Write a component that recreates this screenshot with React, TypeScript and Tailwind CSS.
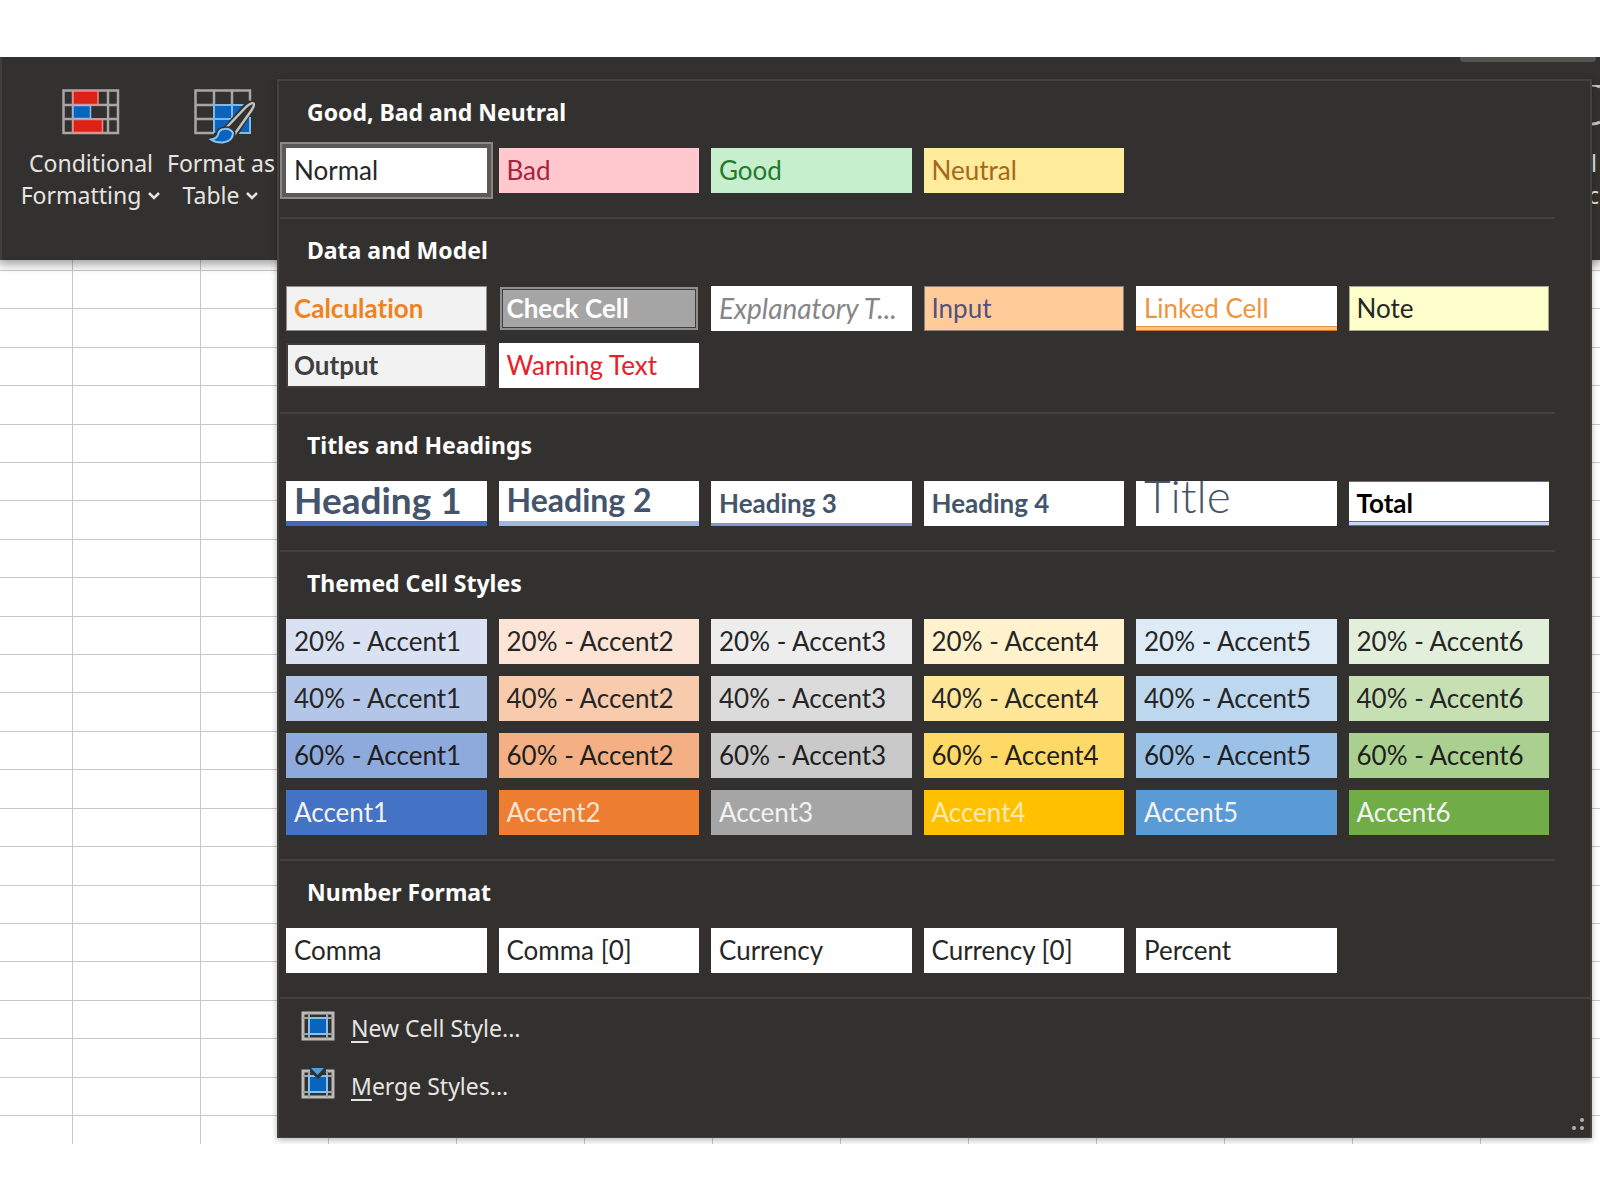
import { useState } from 'react'
import clsx from 'clsx'

interface CellStyle {
  name: string
  look: string
  text?: string
}

interface StyleGroup {
  title: string
  styles: CellStyle[]
}

const groups: StyleGroup[] = [
  {
    title: 'Good, Bad and Neutral',
    styles: [
      { name: 'Normal', look: 'bg-white text-[#262626]' },
      { name: 'Bad', look: 'bg-[#ffc7ce] text-[#a5243a]' },
      { name: 'Good', look: 'bg-[#c6efce] text-[#257a2b]' },
      { name: 'Neutral', look: 'bg-[#ffeb9c] text-[#a5681a]' },
    ],
  },
  {
    title: 'Data and Model',
    styles: [
      { name: 'Calculation', look: 'bg-[#f2f2f2] text-[#f0821e] font-bold shadow-[inset_0_0_0_1px_#8c8b8a]' },
      {
        name: 'Check Cell',
        look: 'bg-[#a5a5a5] text-white font-bold shadow-[inset_0_0_0_1px_#33312f,inset_0_0_0_3px_#8f8f8f,inset_0_0_0_4px_#3f3f3f]',
      },
      { name: 'Explanatory T...', look: 'bg-white text-[#868686] italic', text: 'text-[28px] leading-9' },
      { name: 'Input', look: 'bg-[#ffcc99] text-[#55507c] shadow-[inset_0_0_0_1px_#8c8179]' },
      {
        name: 'Linked Cell',
        look: 'bg-white text-[#ee9440] shadow-[inset_0_-1px_0_#cf7420,inset_0_-4px_0_#fcc27c,inset_0_-5px_0_#dd934a]',
      },
      { name: 'Note', look: 'bg-[#ffffcc] text-[#262626] shadow-[inset_0_0_0_1px_#a6a595]' },
      { name: 'Output', look: 'bg-[#f2f2f2] text-[#3f3f3f] font-bold shadow-[inset_0_0_0_2px_#3f3e3d]' },
      { name: 'Warning Text', look: 'bg-white text-[#e8202a]' },
    ],
  },
  {
    title: 'Titles and Headings',
    styles: [
      {
        name: 'Heading 1',
        look: 'bg-white text-[#44546a] font-bold shadow-[inset_0_-5px_0_#4068b8]',
        text: 'text-[37px] leading-[37px] pb-2',
      },
      {
        name: 'Heading 2',
        look: 'bg-white text-[#44546a] font-bold shadow-[inset_0_-5px_0_#a2b5dd]',
        text: 'text-[32px] leading-[37px] pb-2',
      },
      { name: 'Heading 3', look: 'bg-white text-[#44546a] font-bold shadow-[inset_0_-3px_0_#8099cc]' },
      { name: 'Heading 4', look: 'bg-white text-[#44546a] font-bold' },
      { name: 'Title', look: 'bg-white text-[#44546a] font-light', text: 'text-[46px] leading-[37px] pb-4' },
      {
        name: 'Total',
        look: 'bg-white text-black font-bold shadow-[inset_0_1px_0_#4a72c0,inset_0_-1px_0_#4a72c0,inset_0_-4px_0_#c6d6f4,inset_0_-5px_0_#4a72c0]',
      },
    ],
  },
  {
    title: 'Themed Cell Styles',
    styles: [
      { name: '20% - Accent1', look: 'bg-[#d9e1f2] text-[#262626]' },
      { name: '20% - Accent2', look: 'bg-[#fce4d6] text-[#262626]' },
      { name: '20% - Accent3', look: 'bg-[#ededed] text-[#262626]' },
      { name: '20% - Accent4', look: 'bg-[#fff2cc] text-[#262626]' },
      { name: '20% - Accent5', look: 'bg-[#ddebf7] text-[#262626]' },
      { name: '20% - Accent6', look: 'bg-[#e2efda] text-[#262626]' },
      { name: '40% - Accent1', look: 'bg-[#b4c6e7] text-[#262626]' },
      { name: '40% - Accent2', look: 'bg-[#f8cbad] text-[#262626]' },
      { name: '40% - Accent3', look: 'bg-[#dbdbdb] text-[#262626]' },
      { name: '40% - Accent4', look: 'bg-[#ffe699] text-[#262626]' },
      { name: '40% - Accent5', look: 'bg-[#bdd7ee] text-[#262626]' },
      { name: '40% - Accent6', look: 'bg-[#c6e0b4] text-[#262626]' },
      { name: '60% - Accent1', look: 'bg-[#8ea9db] text-[#1f1f1f]' },
      { name: '60% - Accent2', look: 'bg-[#f4b084] text-[#1f1f1f]' },
      { name: '60% - Accent3', look: 'bg-[#c9c9c9] text-[#1f1f1f]' },
      { name: '60% - Accent4', look: 'bg-[#ffd966] text-[#1f1f1f]' },
      { name: '60% - Accent5', look: 'bg-[#9bc2e6] text-[#1f1f1f]' },
      { name: '60% - Accent6', look: 'bg-[#a9d08e] text-[#1f1f1f]' },
      { name: 'Accent1', look: 'bg-[#4472c4] text-[#f2f2f2]' },
      { name: 'Accent2', look: 'bg-[#ed7d31] text-[#fbe5d0]' },
      { name: 'Accent3', look: 'bg-[#a5a5a5] text-[#f2f2f2]' },
      { name: 'Accent4', look: 'bg-[#ffc000] text-[#fdebb0]' },
      { name: 'Accent5', look: 'bg-[#5b9bd5] text-[#f2f2f2]' },
      { name: 'Accent6', look: 'bg-[#70ad47] text-[#f2f2f2]' },
    ],
  },
  {
    title: 'Number Format',
    styles: [
      { name: 'Comma', look: 'bg-white text-[#262626]' },
      { name: 'Comma [0]', look: 'bg-white text-[#262626]' },
      { name: 'Currency', look: 'bg-white text-[#262626]' },
      { name: 'Currency [0]', look: 'bg-white text-[#262626]' },
      { name: 'Percent', look: 'bg-white text-[#262626]' },
    ],
  },
]

function Chevron() {
  return (
    <svg width="14" height="10" viewBox="0 0 14 10" className="inline-block ml-1.5 mb-1" fill="none">
      <path d="M2 2l5 5 5-5" stroke="#e4e2e0" strokeWidth="2.5" />
    </svg>
  )
}

function ConditionalIcon() {
  return (
    <svg width="58" height="56" viewBox="0 0 58 56" fill="none">
      <path d="M1.5 1.5h54.5v42.5H1.5z M1.5 16h54.5 M1.5 30h54.5 M11 1.5v42.5 M46 1.5v42.5" stroke="#a9a7a5" strokeWidth="2.5" />
      <path d="M29.5 17.500h15v11.500h-15z" fill="#33312f" />
      <path d="M11 2h25v13.500H11z M11 30.500h29.500v13H11z" fill="#dc2217" stroke="#ee8a84" strokeWidth="1.5" />
      <path d="M11 16.500h17.500v13H11z" fill="#0a64bd" stroke="#8fbde8" strokeWidth="1.5" />
    </svg>
  )
}

function TableIcon() {
  return (
    <svg width="58" height="56" viewBox="0 0 58 56" fill="none" className="ml-1 overflow-visible">
      <path d="M20 16h36v28H20z" fill="#0a64bd" />
      <path d="M56 13V1.500H1.500V44H20 M1.500 16H20 M1.500 30H20 M20 1.500V16 M38 1.500V16" stroke="#a9a7a5" strokeWidth="2.5" />
      <path d="M20 44V16h36 M38 16v14 M20 30h22 M56 28v16H38" stroke="#7fb9ea" strokeWidth="2" />
      <path d="M32 40L54 15q4-2 4 3L40 47z" fill="#33312f" stroke="#33312f" strokeWidth="6" />
      <path d="M32 39L52 18q6-5 7.500-3.500T57 22L40 46z" fill="#33312f" stroke="#c4c2c0" strokeWidth="2.5" strokeLinejoin="round" />
      <path d="M30 40q6-1 9 4 0 8-10 9.500-7 .5-12-3 6-1 7-5 1-5 6-5.500z" fill="#0a64bd" stroke="#33312f" strokeWidth="5" />
      <path d="M30 40q6-1 9 4 0 8-10 9.500-7 .5-12-3 6-1 7-5 1-5 6-5.500z" fill="#0a64bd" stroke="#8cc4f0" strokeWidth="2" />
    </svg>
  )
}

function CellStyleIcon({ merge = false }: { merge?: boolean }) {
  return (
    <svg width="34" height="34" viewBox="0 0 34 34" fill="none" className="mb-1">
      <path d="M2 4h30v26H2z" stroke="#bdbbb9" strokeWidth="3" />
      <path d="M2 9h30 M2 25h30 M8 4v26 M26 4v26" stroke="#a5a3a1" strokeWidth="2" />
      <path d="M8 9h18v16H8z" fill="#0a64bd" stroke="#8cbfea" strokeWidth="2" />
      {merge && (
        <>
          <path d="M9 0h16v5l-8 7-8-7z" fill="#33312f" />
          <path d="M10 1h13l-6.500 7z" fill="#4a9fdc" />
        </>
      )}
    </svg>
  )
}

function Ribbon() {
  return (
    <div className="h-[203px] shrink-0 bg-[#33312f] flex items-start pl-[11px] pt-7 text-[23px] leading-8 text-[#e6e4e2] border-l-2 border-[#403e3c] relative z-10 shadow-[0_2px_10px_2px_rgba(0,0,0,0.4)]">
      <button className="w-[156px] shrink-0 flex flex-col items-center gap-0.5 pt-1 whitespace-nowrap">
        <ConditionalIcon />
        <span className="flex flex-col items-center">
          <span>Conditional</span>
          <span>Formatting<Chevron /></span>
        </span>
      </button>
      <button className="w-[104px] shrink-0 flex flex-col items-center gap-0.5 pt-1 whitespace-nowrap">
        <TableIcon />
        <span className="flex flex-col items-center">
          <span>Format as</span>
          <span>Table<Chevron /></span>
        </span>
      </button>
      <button className="ml-auto w-2 shrink-0 flex flex-col items-start">
        <svg width="8" height="62" viewBox="0 0 8 62" fill="none">
          <path d="M0 0q5 0 8 2 M0 39q5 0 8-2" stroke="#c4c2c0" strokeWidth="3" />
        </svg>
        <span className="-ml-px">l</span>
        <span className="-ml-1">c</span>
      </button>
      <div className="absolute top-0 right-1 w-[136px] h-[5px] rounded-b bg-[#555350]" />
    </div>
  )
}

function Sheet() {
  const rows = Array.from({ length: 24 }, (_, i) => i)
  const cols = Array.from({ length: 20 }, (_, i) => i)

  return (
    <div className="flex-1 flex flex-col overflow-hidden bg-white">
      {rows.map((row) => (
        <div
          key={row}
          className={clsx(
            'flex border-[#c8c8c8]',
            row === 0 && 'h-[11px] border-b',
            row > 0 && row < 23 && 'flex-1 border-b',
            row === 23 && 'h-7'
          )}
        >
          {cols.map((col) => (
            <div key={col} className={clsx('shrink-0 border-r border-[#c8c8c8]', col === 0 ? 'w-[73px]' : 'w-32')} />
          ))}
        </div>
      ))}
    </div>
  )
}

export default function App() {
  const [selected, setSelected] = useState('Normal')

  return (
    <div className="bg-white pt-[57px] pb-14 font-['Segoe_UI','Noto_Sans',sans-serif]">
      <div className="grid overflow-hidden">
        <div className="col-start-1 row-start-1 flex flex-col min-w-0 overflow-hidden">
          <Ribbon />
          <Sheet />
        </div>

        <div className="col-start-1 row-start-1 z-20 min-w-0 mt-[22px] mb-[6px] ml-[277px] mr-2 bg-[#33312f] border-x-2 border-b border-[#434240] shadow-[0_2px_6px_rgba(0,0,0,0.3)]">
          {groups.map((group, i) => (
            <section key={group.title} className={clsx('pb-6', i === 0 && 'border-t-2 border-[#434240]')}>
              <div className={clsx('ml-px', i > 0 && 'mr-[35px] border-t-2 border-[#434240]')} />
              <h2 className="h-[67px] pl-7 pt-[15px] text-[23px] leading-8 font-bold text-white">{group.title}</h2>
              <div className="grid grid-cols-6 gap-3 pl-[7px] pr-[41px]">
                {group.styles.map((style) => (
                  <button
                    key={style.name}
                    onClick={() => setSelected(style.name)}
                    className={clsx(
                      "h-[45px] min-w-0 font-['Lato',sans-serif] text-left [font-variant-ligatures:none]",
                      selected === style.name && 'ring-4 ring-[#5c5a58] outline-2 outline-offset-4 outline-[#8a8886]'
                    )}
                  >
                    <span className={clsx('h-full flex items-center px-2 pb-px overflow-hidden', style.look)}>
                      <span className={clsx('whitespace-nowrap', style.text ?? 'text-[26px] leading-9')}>
                        {style.name}
                      </span>
                    </span>
                  </button>
                ))}
              </div>
            </section>
          ))}

          <div className="relative border-t-2 border-[#434240] ml-px pb-[22px] text-[23px] text-[#e6e4e2]">
            <button className="flex items-center w-full h-[58px] pl-[21px] gap-4">
              <CellStyleIcon />
              <span><span className="underline underline-offset-4">N</span>ew Cell Style...</span>
            </button>
            <button className="flex items-center w-full h-[58px] pl-[21px] gap-4">
              <CellStyleIcon merge />
              <span><span className="underline underline-offset-4">M</span>erge Styles...</span>
            </button>
            <svg width="14" height="14" viewBox="0 0 14 14" className="absolute right-1 bottom-1.5" fill="#b5b3b1">
              <circle cx="10" cy="3" r="2" />
              <circle cx="2" cy="11" r="2" />
              <circle cx="10" cy="11" r="2" />
            </svg>
          </div>
        </div>
      </div>
    </div>
  )
}
